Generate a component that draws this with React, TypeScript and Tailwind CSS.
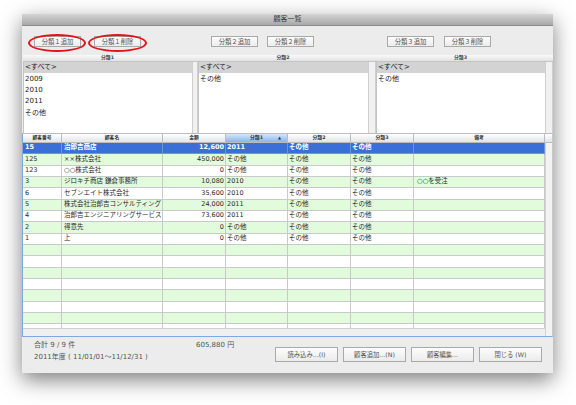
import React from "react";

const FONT = "font-['DejaVu_Sans','Noto_Sans_CJK_JP',sans-serif]";

type Row = {
  no: string;
  name: string;
  amount: string;
  c1: string;
  c2: string;
  c3: string;
  note: string;
};

const rows: Row[] = [
  { no: "15", name: "治郎吉商店", amount: "12,600", c1: "2011", c2: "その他", c3: "その他", note: "" },
  { no: "125", name: "××株式会社", amount: "450,000", c1: "その他", c2: "その他", c3: "その他", note: "" },
  { no: "123", name: "○○株式会社", amount: "0", c1: "その他", c2: "その他", c3: "その他", note: "" },
  { no: "3", name: "ジロキチ商店 鎌倉事務所", amount: "10,080", c1: "2010", c2: "その他", c3: "その他", note: "○○を受注" },
  { no: "6", name: "セブンエイト株式会社", amount: "35,600", c1: "2010", c2: "その他", c3: "その他", note: "" },
  { no: "5", name: "株式会社治郎吉コンサルティング", amount: "24,000", c1: "2011", c2: "その他", c3: "その他", note: "" },
  { no: "4", name: "治郎吉エンジニアリングサービス", amount: "73,600", c1: "2011", c2: "その他", c3: "その他", note: "" },
  { no: "2", name: "得意先", amount: "0", c1: "その他", c2: "その他", c3: "その他", note: "" },
  { no: "1", name: "上", amount: "0", c1: "その他", c2: "その他", c3: "その他", note: "" },
];

const GRID = "grid grid-cols-[39px_101px_63px_62px_63px_63px_131px]";

function Btn({ label, className = "" }: { label: string; className?: string }) {
  return (
    <div
      className={`h-[11px] w-[47px] flex items-center justify-center border border-[#a9a9a9] bg-linear-to-b from-[#fdfdfd] to-[#ececec] text-[6.3px] text-[#555] ${className}`}
    >
      {label}
    </div>
  );
}

function FootBtn({ label }: { label: string }) {
  return (
    <div className="h-[15px] w-[63px] flex items-center justify-center border border-[#a9a9a9] bg-linear-to-b from-[#fdfdfd] to-[#ebebeb] text-[6.3px] text-[#555]">
      {label}
    </div>
  );
}

function Panel({ title, items, w }: { title: string; items: string[]; w: string }) {
  return (
    <div className={`${w} flex flex-col`}>
      <div className="h-[7px] flex items-center justify-center bg-linear-to-b from-[#fafafa] to-[#e2e2e2] border-b border-[#c4c4c4] text-[4.8px] font-bold text-[#444]">
        {title}
      </div>
      <div className="flex-1 bg-white border-l border-[#c4c4c4]">
        <div className="h-[11.33px] bg-[#d3d3d3] flex items-center pl-[1px] text-[7px] text-[#222]">
          &lt;すべて&gt;
        </div>
        {items.map((it) => (
          <div key={it} className="h-[11.33px] flex items-center pl-[1px] text-[7px] text-[#222]">
            {it}
          </div>
        ))}
      </div>
    </div>
  );
}

function Strip({ w }: { w: string }) {
  return (
    <div className={`${w} flex flex-col`}>
      <div className="h-[7px] bg-linear-to-b from-[#fafafa] to-[#e2e2e2] border-b border-[#c4c4c4]" />
      <div className="flex-1 bg-[#f1f1f1] border-l border-r border-[#cfcfcf]" />
    </div>
  );
}

function HeadCell({ label, sorted = false }: { label: string; sorted?: boolean }) {
  return (
    <div
      className={`relative h-full flex items-center justify-center border-r border-[#bcbcbc] text-[4.8px] font-bold text-[#333] ${
        sorted ? "bg-linear-to-b from-[#d3e6fb] to-[#86b6ec]" : "bg-linear-to-b from-[#ffffff] to-[#e4e4e4]"
      }`}
    >
      {label}
      {sorted && <span className="absolute right-[6px] text-[4px] text-[#334]">▲</span>}
    </div>
  );
}

export default function App() {
  const empty = Array.from({ length: 8 });
  return (
    <div className={`w-[576px] h-[405px] bg-white pt-[14px] pl-[22px] overflow-hidden ${FONT}`}>
      <div className="relative w-[531px] h-[359px] bg-[#ececec] flex flex-col shadow-[0_7px_20px_rgba(0,0,0,0.5)]">
        {/* title bar */}
        <div className="h-[12px] bg-linear-to-b from-[#d4d4d4] to-[#a8a8a8] border-b border-[#8c8c8c] flex items-center justify-center text-[7px] text-[#3a3a3a]">
          顧客一覧
        </div>

        {/* category buttons */}
        <div className="h-[29px] flex items-start pt-[10px] pl-[12px]">
          <Btn label="分類１追加" />
          <Btn label="分類１削除" className="ml-[13px]" />
          <Btn label="分類２追加" className="ml-[70px]" />
          <Btn label="分類２削除" className="ml-[9px]" />
          <Btn label="分類３追加" className="ml-[73px]" />
          <Btn label="分類３削除" className="ml-[10px]" />
        </div>

        {/* category lists */}
        <div className="h-[78px] flex pl-[1px]">
          <Panel title="分類1" items={["2009", "2010", "2011", "その他"]} w="w-[169px]" />
          <Strip w="w-[6px]" />
          <Panel title="分類2" items={["その他"]} w="w-[170px]" />
          <Strip w="w-[8px]" />
          <Panel title="分類3" items={["その他"]} w="w-[169px]" />
          <Strip w="w-[8px]" />
        </div>

        {/* table */}
        <div className="h-[204px] flex border-t border-[#bdbdbd] border-l border-r border-b border-l-[#7fa9de] border-r-[#c8c8c8] border-b-[#7fa9de]">
          <div className="w-[522px] flex flex-col">
            <div className={`${GRID} h-[9px] border-b border-[#bcbcbc]`}>
              <HeadCell label="顧客番号" />
              <HeadCell label="顧客名" />
              <HeadCell label="金額" />
              <HeadCell label="分類1" sorted />
              <HeadCell label="分類2" />
              <HeadCell label="分類3" />
              <HeadCell label="備考" />
            </div>
            <div className="h-[185px] overflow-hidden bg-white">
              {rows.map((r, i) => {
                const sel = i === 0;
                const bg = sel ? "bg-[#3a6fd5]" : i % 2 === 1 ? "bg-[#e1fbdc]" : "bg-white";
                const txt = sel ? "text-white font-bold" : "text-[#2a2a2a]";
                const line = sel ? "border-[#6d94de]" : "border-[#c9c9c9]";
                const cell = `h-full flex items-center overflow-hidden whitespace-nowrap border-r ${line}`;
                return (
                  <div key={i} className={`${GRID} h-[11.33px] border-b ${line} ${bg} ${txt} text-[6.5px]`}>
                    <div className={`${cell} pl-[2px]`}>{r.no}</div>
                    <div className={`${cell} pl-[2px]`}>{r.name}</div>
                    <div className={`${cell} justify-end pr-[1px]`}>{r.amount}</div>
                    <div className={`${cell} pl-[1px]`}>{r.c1}</div>
                    <div className={`${cell} pl-[1px]`}>{r.c2}</div>
                    <div className={`${cell} pl-[1px]`}>{r.c3}</div>
                    <div className={`${cell} pl-[3px]`}>{r.note}</div>
                  </div>
                );
              })}
              {empty.map((_, j) => {
                const i = rows.length + j;
                const bg = i % 2 === 1 ? "bg-[#e1fbdc]" : "bg-white";
                return (
                  <div key={i} className={`${GRID} h-[11.33px] border-b border-[#c9c9c9] ${bg}`}>
                    {Array.from({ length: 7 }).map((__, k) => (
                      <div key={k} className="h-full border-r border-[#c9c9c9]" />
                    ))}
                  </div>
                );
              })}
            </div>
            <div className="flex-1 bg-[#efefef] border-t border-[#d0d0d0]" />
          </div>
          <div className="w-[7px] flex flex-col">
            <div className="h-[9px] bg-linear-to-b from-[#ffffff] to-[#e4e4e4] border-b border-[#bcbcbc]" />
            <div className="flex-1 bg-[#f3f3f3] border-l border-[#d3d3d3]" />
          </div>
        </div>

        {/* footer */}
        <div className="flex-1 flex pl-[12px] pr-[11px]">
          <div className="flex flex-col pt-[2px] text-[7px] text-[#555] leading-[12px]">
            <div className="flex">
              <span className="w-[162px]">合計 9 / 9 件</span>
              <span>605,880 円</span>
            </div>
            <div>2011年度 ( 11/01/01〜11/12/31 )</div>
          </div>
          <div className="ml-auto flex gap-[5px] pt-[10px]">
            <FootBtn label="読み込み...(I)" />
            <FootBtn label="顧客追加...(N)" />
            <FootBtn label="顧客編集..." />
            <FootBtn label="閉じる (W)" />
          </div>
        </div>

        {/* red annotation ellipses */}
        <div className="absolute left-[6px] top-[20px] w-[58px] h-[18px] rounded-[50%] border-2 border-[#e0141c]" />
        <div className="absolute left-[66px] top-[20px] w-[59px] h-[18px] rounded-[50%] border-2 border-[#e0141c]" />
      </div>
    </div>
  );
}
